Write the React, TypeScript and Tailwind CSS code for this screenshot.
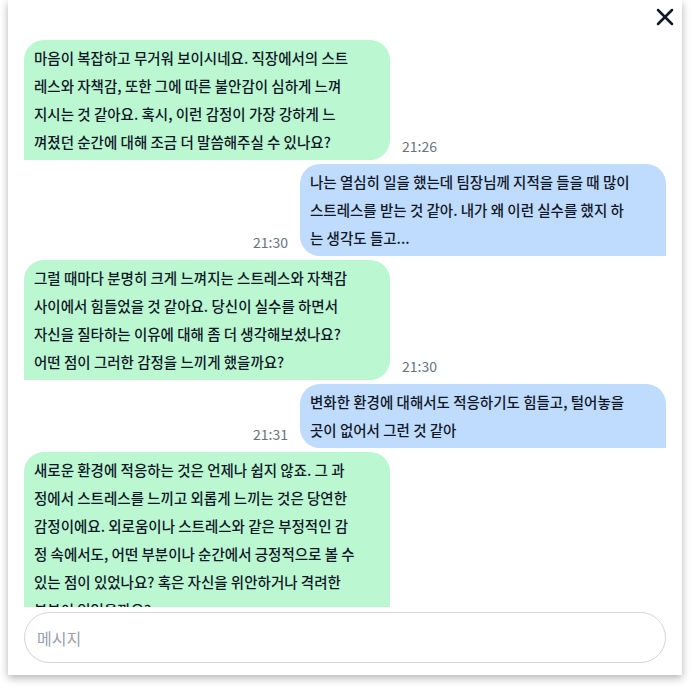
import React from 'react';
import { X } from 'lucide-react';

type Msg = { from: 'bot' | 'user'; lines: string[]; time?: string };

const messages: Msg[] = [
  {
    from: 'bot',
    lines: [
      '마음이 복잡하고 무거워 보이시네요. 직장에서의 스트',
      '레스와 자책감, 또한 그에 따른 불안감이 심하게 느껴',
      '지시는 것 같아요. 혹시, 이런 감정이 가장 강하게 느',
      '껴졌던 순간에 대해 조금 더 말씀해주실 수 있나요?',
    ],
    time: '21:26',
  },
  {
    from: 'user',
    lines: [
      '나는 열심히 일을 했는데 팀장님께 지적을 들을 때 많이',
      '스트레스를 받는 것 같아. 내가 왜 이런 실수를 했지 하',
      '는 생각도 들고...',
    ],
    time: '21:30',
  },
  {
    from: 'bot',
    lines: [
      '그럴 때마다 분명히 크게 느껴지는 스트레스와 자책감',
      '사이에서 힘들었을 것 같아요. 당신이 실수를 하면서',
      '자신을 질타하는 이유에 대해 좀 더 생각해보셨나요?',
      '어떤 점이 그러한 감정을 느끼게 했을까요?',
    ],
    time: '21:30',
  },
  {
    from: 'user',
    lines: ['변화한 환경에 대해서도 적응하기도 힘들고, 털어놓을', '곳이 없어서 그런 것 같아'],
    time: '21:31',
  },
  {
    from: 'bot',
    lines: [
      '새로운 환경에 적응하는 것은 언제나 쉽지 않죠. 그 과',
      '정에서 스트레스를 느끼고 외롭게 느끼는 것은 당연한',
      '감정이에요. 외로움이나 스트레스와 같은 부정적인 감',
      '정 속에서도, 어떤 부분이나 순간에서 긍정적으로 볼 수',
      '있는 점이 있었나요? 혹은 자신을 위안하거나 격려한',
      '부분이 있었을까요?',
    ],
  },
];

function Bubble({ msg }: { msg: Msg }) {
  const isBot = msg.from === 'bot';
  return (
    <div className={`flex items-end ${isBot ? 'justify-start' : 'justify-end'}`}>
      {!isBot && msg.time && (
        <span className="mr-3 mb-1 text-[14px] leading-5 text-gray-500">{msg.time}</span>
      )}
      <div
        className={`w-[366px] shrink-0 px-2.5 py-1 text-[14.5px] leading-[28px] font-medium text-gray-900 ${
          isBot ? 'bg-[#bbf7d0] rounded-[20px] rounded-bl-none' : 'bg-[#bfdbfe] rounded-[20px] rounded-br-none'
        }`}
      >
        {msg.lines.map((line, i) => (
          <div key={i} className="whitespace-nowrap">
            {line}
          </div>
        ))}
      </div>
      {isBot && msg.time && (
        <span className="ml-3 mb-1 text-[14px] leading-5 text-gray-500">{msg.time}</span>
      )}
    </div>
  );
}

export default function App() {
  return (
    <div
      className="w-[690px] h-[690px] bg-white"
      style={{ fontFamily: '"Noto Sans CJK KR", "Noto Sans", sans-serif' }}
    >
      <div className="mx-2 h-[675px] flex flex-col bg-white shadow-[0_3px_8px_rgba(0,0,0,0.3)]">
        <div className="h-10 flex justify-end items-start pt-[3px] pr-[3px]">
          <button className="text-gray-900">
            <X size={28} strokeWidth={2.2} />
          </button>
        </div>
        <div className="flex-1 overflow-hidden px-4 flex flex-col gap-1">
          {messages.map((m, i) => (
            <Bubble key={i} msg={m} />
          ))}
        </div>
        <div className="px-4 pt-[5px] pb-3">
          <input
            placeholder="메시지"
            className="w-full h-[51px] rounded-[26px] border border-gray-300 px-3 text-base text-gray-900 placeholder:text-gray-400 outline-none"
          />
        </div>
      </div>
    </div>
  );
}
